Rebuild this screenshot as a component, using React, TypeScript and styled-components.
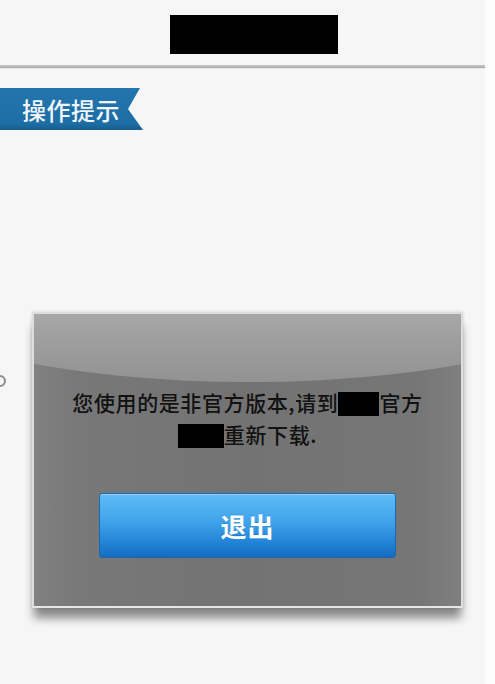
import React from "react";
import styled, { createGlobalStyle } from "styled-components";

const GlobalStyle = createGlobalStyle`
  html, body {
    margin: 0;
    padding: 0;
    background: #fdfdfd;
  }
  body {
    font-family: "Noto Sans CJK SC", "Noto Sans", sans-serif;
  }
`;

const Screen = styled.div`
  position: relative;
  width: 495px;
  height: 684px;
  display: flex;
  overflow: hidden;
  background: #fdfdfd;
`;

const Page = styled.div`
  width: 485px;
  height: 100%;
  background: #f6f6f6;
  display: flex;
  flex-direction: column;
`;

const Header = styled.div`
  height: 65px;
  box-sizing: border-box;
  padding: 15px 0 0 23px;
  display: flex;
  justify-content: center;
  align-items: flex-start;
`;

const Redacted = styled.span<{ $w: number; $h: number }>`
  display: inline-block;
  width: ${(p) => p.$w}px;
  height: ${(p) => p.$h}px;
  background: #000;
  vertical-align: -5px;
`;

const Divider = styled.div`
  height: 3px;
  background: linear-gradient(#c9c9c9, #a8a8a8);
  box-shadow: 0 1px 1px rgba(0, 0, 0, 0.06);
`;

const Ribbon = styled.div`
  margin-top: 20px;
  width: 143px;
  height: 42px;
  box-sizing: border-box;
  padding-left: 22px;
  display: flex;
  align-items: center;
  background: linear-gradient(#2376ad, #1c6ea5 85%, #165d8e);
  clip-path: polygon(0 0, 140px 0, 128px 50%, 143px 100%, 0 100%);
  color: #f2f6fa;
  font-size: 24px;
  font-weight: 500;
  letter-spacing: 0.5px;
`;

const Ring = styled.div`
  margin: 245px 0 0 -6px;
  width: 12px;
  height: 12px;
  box-sizing: border-box;
  border: 2px solid #8c8c8c;
  border-radius: 50%;
`;

const Overlay = styled.div`
  position: absolute;
  inset: 0;
  padding-top: 312px;
  display: flex;
  justify-content: center;
  align-items: flex-start;
`;

const Dialog = styled.div`
  position: relative;
  overflow: hidden;
  width: 431px;
  height: 296px;
  box-sizing: border-box;
  border: 2px solid #dedede;
  border-bottom-color: #e6e6e6;
  background: linear-gradient(
    90deg,
    #818181,
    #787878 10%,
    #737373 50%,
    #767676 90%,
    #7f7f7f
  );
  box-shadow: 0 12px 9px -2px rgba(0, 0, 0, 0.45), 0 0 3px rgba(0, 0, 0, 0.15);
  display: flex;
  flex-direction: column;
  align-items: center;

  &::before {
    content: "";
    position: absolute;
    top: -20px;
    left: -130px;
    width: 690px;
    height: 88px;
    border-radius: 0 0 50% 50% / 0 0 84px 84px;
    background: linear-gradient(#b0b0b0, #a2a2a2 40%, #929292);
  }
`;

const Message = styled.p`
  position: relative;
  margin: 72px 0 0;
  font-size: 21px;
  font-weight: 500;
  letter-spacing: 0.6px;
  line-height: 32px;
  color: #121212;
  text-align: center;
`;

const ExitButton = styled.button`
  position: relative;
  margin-top: 43px;
  width: 297px;
  height: 65px;
  border: 1px solid #1a69b3;
  border-radius: 3px;
  background: linear-gradient(#5dbbf7, #43a6ec 40%, #2386d8 75%, #156cbf);
  box-shadow: inset 0 1px 0 rgba(255, 255, 255, 0.35);
  color: #fff;
  font-family: "Noto Sans CJK SC", sans-serif;
  font-size: 26px;
  font-weight: 700;
  letter-spacing: 1px;
  text-shadow: 0 -1px 0 rgba(0, 0, 0, 0.15);
  cursor: pointer;
`;

export default function App() {
  return (
    <Screen>
      <GlobalStyle />
      <Page>
        <Header>
          <Redacted $w={168} $h={39} />
        </Header>
        <Divider />
        <Ribbon>操作提示</Ribbon>
        <Ring />
      </Page>
      <Overlay>
        <Dialog>
          <Message>
            您使用的是非官方版本,请到<Redacted $w={41} $h={24} />官方
            <br />
            <Redacted $w={46} $h={24} />重新下载.
          </Message>
          <ExitButton type="button">退出</ExitButton>
        </Dialog>
      </Overlay>
    </Screen>
  );
}
